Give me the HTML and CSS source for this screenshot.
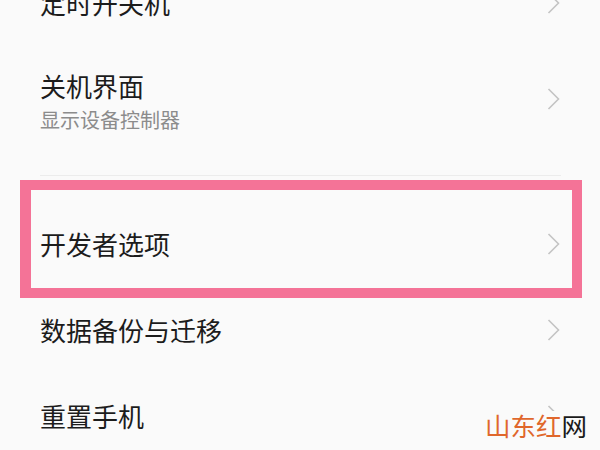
FILE: index.html
```html
<!DOCTYPE html>
<html lang="zh-CN">
<head>
<meta charset="utf-8">
<title>设置</title>
<link rel="stylesheet" href="styles.css">
</head>
<body>
<div class="screen">
  <div class="list">
    <div class="row">
      <span class="title">定时开关机</span>
      <svg class="chev" width="14" height="24" viewBox="0 0 14 24"><polyline points="1.5,2 11.5,12 1.5,22"/></svg>
    </div>
    <div class="row row-two">
      <div class="texts">
        <span class="title">关机界面</span>
        <span class="sub">显示设备控制器</span>
      </div>
      <svg class="chev chev-up" width="14" height="24" viewBox="0 0 14 24"><polyline points="1.5,2 11.5,12 1.5,22"/></svg>
    </div>
    <div class="row row-gap">
      <span class="title">开发者选项</span>
      <svg class="chev" width="14" height="24" viewBox="0 0 14 24"><polyline points="1.5,2 11.5,12 1.5,22"/></svg>
      <span class="highlight"></span>
    </div>
    <div class="row">
      <span class="title">数据备份与迁移</span>
      <svg class="chev" width="14" height="24" viewBox="0 0 14 24"><polyline points="1.5,2 11.5,12 1.5,22"/></svg>
    </div>
    <div class="row">
      <span class="title">重置手机</span>
      <svg class="chev" width="14" height="24" viewBox="0 0 14 24"><polyline points="1.5,2 11.5,12 1.5,22"/></svg>
    </div>
  </div>
  <div class="watermark"><span class="wm-red">山东红</span>网</div>
</div>
</body>
</html>
```

FILE: styles.css
```css
html, body {
  margin: 0;
  padding: 0;
  background: #fafafa;
}

.screen {
  position: relative;
  width: 600px;
  height: 450px;
  overflow: hidden;
  background: #fafafa;
  font-family: "Noto Sans CJK SC", "Noto Sans", sans-serif;
}

.list {
  margin: -40px 39px 0 40px;
}

.row {
  position: relative;
  height: 86px;
  display: flex;
  align-items: center;
  justify-content: space-between;
}

.title {
  font-size: 26px;
  line-height: 30px;
  color: #1c1c1c;
}

.row-two {
  height: auto;
  padding: 25px 0 42px;
  border-bottom: 1px solid #ececec;
}

.texts {
  display: flex;
  flex-direction: column;
  gap: 6px;
}

.sub {
  font-size: 20px;
  line-height: 26px;
  color: #8c8c8c;
}

.row-gap {
  margin-top: 25px;
}

.chev {
  flex: none;
  fill: none;
  stroke: #c4c4c4;
  stroke-width: 1.6;
}

.chev-up {
  margin-bottom: 6px;
}

.highlight {
  position: absolute;
  left: -20px;
  right: -21px;
  top: -21px;
  bottom: -11px;
  border: 10px solid #f47397;
  border-left-width: 11px;
  box-sizing: border-box;
  pointer-events: none;
}

.watermark {
  position: absolute;
  left: 482px;
  top: 411px;
  padding: 0 3px;
  background: #fafafa;
  font-size: 25.5px;
  line-height: 28px;
  color: #1a1a1a;
}

.wm-red {
  color: #e0672c;
}
```
